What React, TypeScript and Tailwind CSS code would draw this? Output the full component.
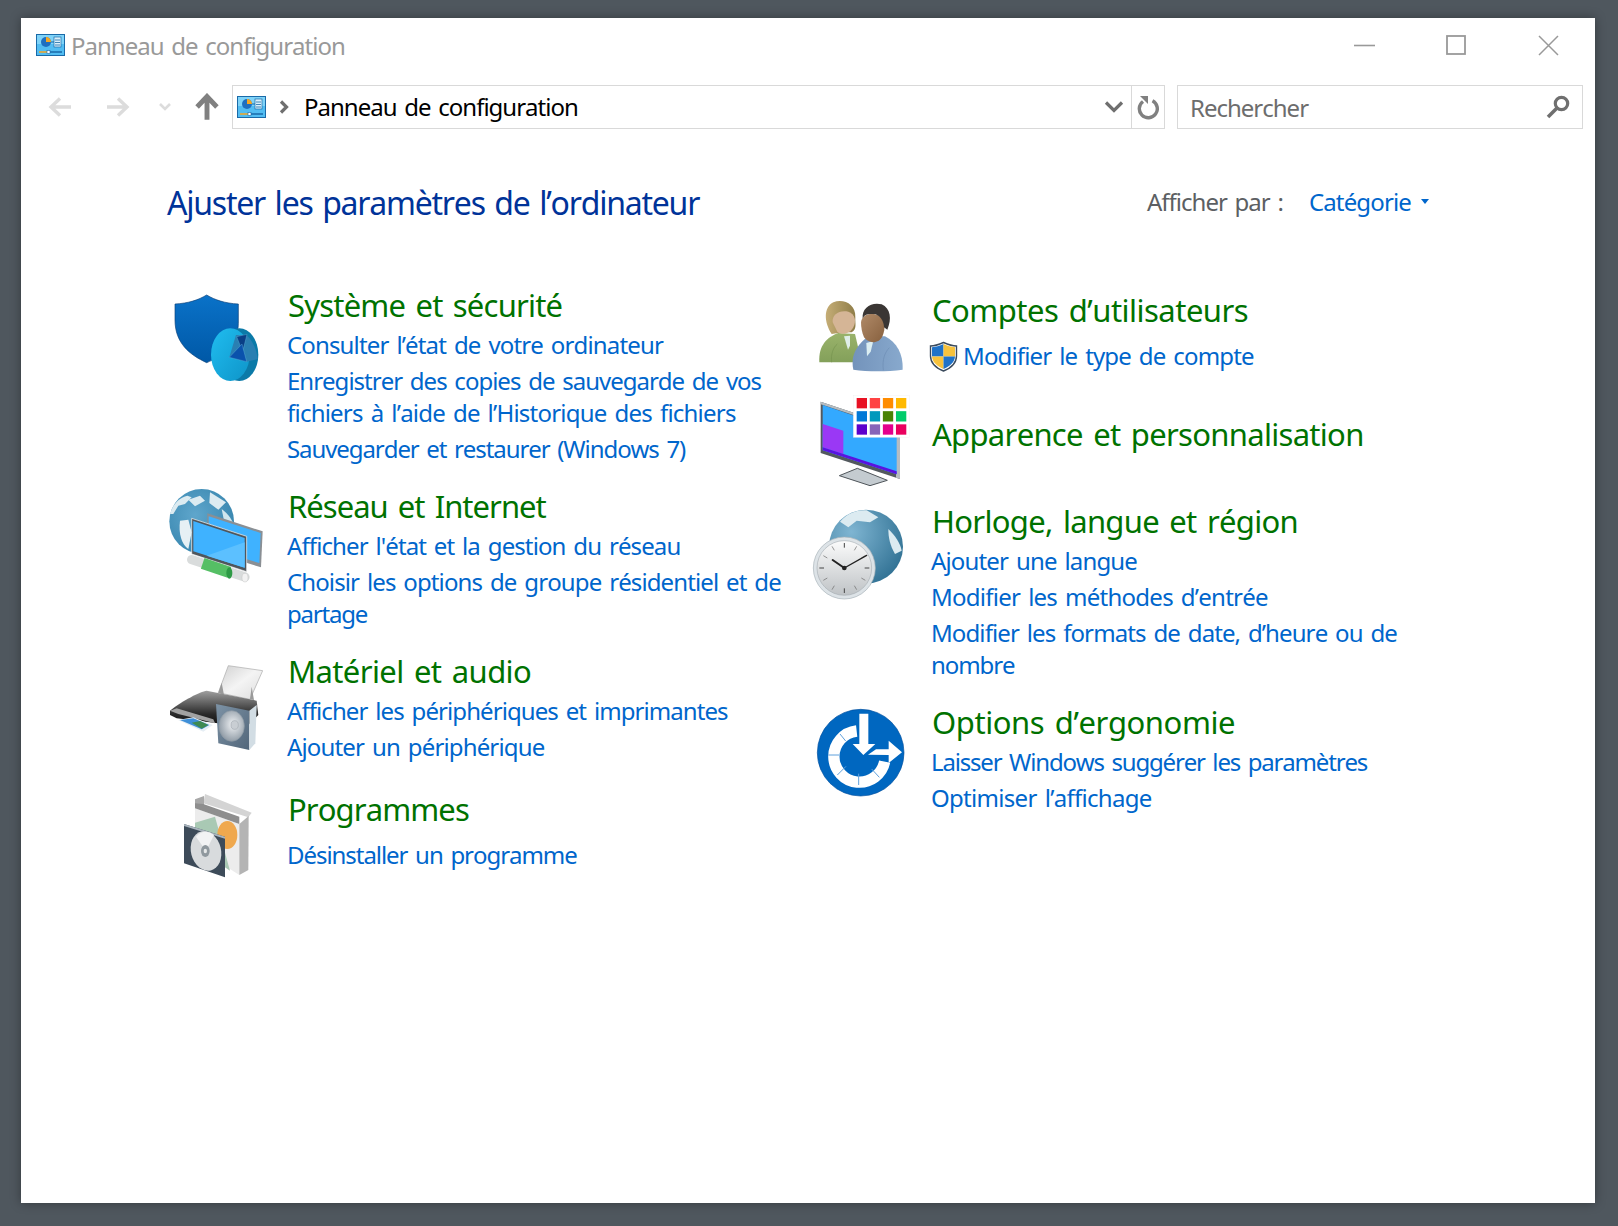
import React from "react";

const CpIcon = () => (
  <svg width="29" height="22" viewBox="0 0 29 22" className="block shrink-0">
    <rect x="0.5" y="0.5" width="28" height="21" fill="#52bdf2" stroke="#1a6aa8" />
    <rect x="1" y="1" width="27" height="9" fill="#7fd3f8" />
    <circle cx="10" cy="8" r="5" fill="#1f6fc0" />
    <path d="M10 8V3a5 5 0 0 1 5 5Z" fill="#f4a623" />
    <path d="M15 8h3" stroke="#1a6aa8" />
    <rect x="18" y="3" width="7" height="10" fill="#d9f0fb" stroke="#1a6aa8" strokeWidth="0.7" />
    <path d="M19 6h5M19 8.5h5M19 11h5" stroke="#1a6aa8" strokeWidth="0.8" />
    <path d="M3 18h8" stroke="#f4a623" strokeWidth="1.5" />
    <path d="M11 18h15" stroke="#1a6aa8" strokeWidth="1.5" />
    <rect x="11" y="16.5" width="3" height="3" fill="#fff" stroke="#1a6aa8" strokeWidth="0.6" />
  </svg>
);

const Arrow = ({ color, dir }: { color: string; dir: "l" | "r" | "u" }) => {
  const rot = dir === "l" ? 0 : dir === "r" ? 180 : 90;
  const size = dir === "u" ? 28 : 24;
  return (
    <svg width={size} height={size} viewBox="0 0 24 24" style={{ transform: `rotate(${rot}deg)` }} className="block">
      <path d="M23 12H3M12 3.5 3 12l9 8.5" fill="none" stroke={color} strokeWidth={dir === "u" ? 4.2 : 3.4} />
    </svg>
  );
};

const ShieldIcon = () => (
  <svg width="96" height="96" viewBox="51 30 288 288" className="block">
    <defs>
      <linearGradient id="s1" x1="0" y1="0" x2="0" y2="1">
        <stop offset="0" stopColor="#0a72c8" />
        <stop offset="1" stopColor="#0058a6" />
      </linearGradient>
      <linearGradient id="s2" x1="0" y1="0" x2="1" y2="1">
        <stop offset="0" stopColor="#20bdf0" />
        <stop offset="1" stopColor="#0e94c8" />
      </linearGradient>
    </defs>
    <path d="M75 72C115 70 145 60 170 45C195 60 225 70 265 72L265 130C265 190 215 230 170 248C120 225 75 190 75 120Z" fill="url(#s1)" stroke="#0b3f78" strokeWidth="2" />
    <ellipse cx="268" cy="224" rx="57" ry="79" fill="#0b7aa8" />
    <ellipse cx="241" cy="224" rx="58" ry="79" fill="url(#s2)" />
    <path d="M238 232L258 165L290 165C310 185 320 210 323 237L290 245Z" fill="#2a7fb2" />
    <path d="M260 170L291 163L278 215Z" fill="#0a3f86" stroke="#6ec4e8" strokeWidth="1" />
    <path d="M238 232L276 192L290 245Z" fill="#0a52ac" stroke="#6ec4e8" strokeWidth="1" />
  </svg>
);

const NetworkIcon = () => (
  <svg width="96" height="96" viewBox="51 624 288 288" className="block">
    <defs>
      <radialGradient id="n1" cx="0.4" cy="0.4" r="0.8">
        <stop offset="0" stopColor="#5fa6cc" />
        <stop offset="1" stopColor="#2f7fa8" />
      </radialGradient>
    </defs>
    <circle cx="155" cy="727" r="97" fill="url(#n1)" />
    <path d="M60 705C70 672 90 655 112 650L125 655L105 675L85 680L70 705Z" fill="#dcebf1" />
    <path d="M90 725L115 722L125 760L115 810C95 795 85 765 90 725Z" fill="#e6f0f4" />
    <path d="M115 662L150 650L165 665L135 682Z M180 640L228 670L205 692L178 672Z" fill="#dcebf1" />
    <path d="M215 690C235 705 250 725 252 745L225 740Z" fill="#cfe6ee" />
    <path d="M172 703L338 757L333 865L172 815Z" fill="#8a8f94" />
    <path d="M176 712L332 762L328 852L176 806Z" fill="#3fb2ff" />
    <path d="M125 718L290 772L290 878L125 825Z" fill="#50565c" stroke="#fff" strokeWidth="2" />
    <path d="M130 726L284 777L284 866L130 817Z" fill="#3fb2ff" />
    <path d="M284 790L284 866L170 830Z" fill="#5cc0ff" />
    <path d="M125 842L285 894" stroke="#d9dcdc" strokeWidth="28" strokeLinecap="round" />
    <path d="M158 853L238 880" stroke="#55bf65" strokeWidth="34" />
    <ellipse cx="238" cy="882" rx="9" ry="17" fill="#2d9a45" />
    <ellipse cx="285" cy="896" rx="9" ry="13" fill="#f2f2f2" stroke="#b5b5b5" />
  </svg>
);

const PrinterIcon = () => (
  <svg width="96" height="96" viewBox="51 60 288 288" className="block">
    <defs>
      <linearGradient id="p1" x1="0" y1="0" x2="0" y2="1">
        <stop offset="0" stopColor="#a0a0a0" />
        <stop offset="0.65" stopColor="#2a2a2a" />
        <stop offset="1" stopColor="#0c0c0c" />
      </linearGradient>
      <linearGradient id="p2" x1="0" y1="0" x2="1" y2="1">
        <stop offset="0" stopColor="#7d93a6" />
        <stop offset="1" stopColor="#52667a" />
      </linearGradient>
      <radialGradient id="p3" cx="0.55" cy="0.45" r="0.6">
        <stop offset="0" stopColor="#f0f2f4" />
        <stop offset="1" stopColor="#8b97a2" />
      </radialGradient>
      <linearGradient id="p4" x1="0" y1="0" x2="1" y2="1">
        <stop offset="0" stopColor="#cfcfcf" />
        <stop offset="0.5" stopColor="#f4f4f4" />
        <stop offset="1" stopColor="#dcdcdc" />
      </linearGradient>
    </defs>
    <path d="M235 77L338 92L300 178L205 158Z" fill="url(#p4)" stroke="#a8a8a8" strokeWidth="2" />
    <path d="M205 158L215 128L222 165Z M300 178L305 140L312 180Z" fill="#9a9a9a" />
    <path d="M60 212C100 180 150 155 170 152L320 182L325 225L290 260L80 235L60 225Z" fill="url(#p1)" />
    <path d="M60 212L80 205L190 238L195 250L85 222Z" fill="#a2a2a2" />
    <path d="M84 240L130 232L188 255L160 275Z" fill="#e6eef4" />
    <path d="M90 240L130 235L178 255L155 268Z" fill="#3f8fd8" />
    <path d="M125 248L150 243L175 255L155 266Z" fill="#3f8a52" />
    <path d="M198 192L298 212L298 330L205 310Z" fill="url(#p2)" />
    <path d="M298 212L320 195L316 310L298 330Z" fill="#d2dde4" />
    <ellipse cx="245" cy="258" rx="38" ry="46" fill="url(#p3)" stroke="#8e9aa4" strokeWidth="2" />
    <ellipse cx="254" cy="255" rx="11" ry="13" fill="#c9ced3" stroke="#7c868e" />
  </svg>
);

const BoxIcon = () => (
  <svg width="96" height="96" viewBox="51 450 288 288" className="block">
    <path d="M165 462L305 518L295 532L160 490Z" fill="#d4d4d4" />
    <path d="M135 478L162 468L162 495L135 505Z" fill="#a8a8a8" />
    <path d="M135 505L268 552L268 705L135 620Z" fill="#ececec" />
    <path d="M135 490L160 492L268 530L268 552L135 505Z" fill="#8e8e8e" />
    <path d="M268 552L296 528L295 690L268 705Z" fill="#b4b4b4" />
    <path d="M135 548L195 530L240 692L135 620Z" fill="#a9c9b4" />
    <ellipse cx="232" cy="585" rx="30" ry="42" fill="#efa84e" />
    <path d="M102 552L225 590L225 712L102 670Z" fill="#3d4b59" />
    <path d="M102 552L225 590L225 596L102 558Z" fill="#a9b4bd" />
    <ellipse cx="168" cy="633" rx="45" ry="60" transform="rotate(-14 168 633)" fill="#d8dbdd" />
    <path d="M168 633L138 590A45 60 0 0 1 192 585Z" fill="#f2f3f4" />
    <ellipse cx="166" cy="633" rx="13" ry="18" fill="#8f989e" />
    <ellipse cx="166" cy="633" rx="5" ry="7" fill="#e5e7e8" />
  </svg>
);

const UsersIcon = () => (
  <svg width="96" height="96" viewBox="36 54 288 288" className="block">
    <defs>
      <linearGradient id="u1" x1="0" y1="0" x2="0" y2="1">
        <stop offset="0" stopColor="#9ab36b" />
        <stop offset="1" stopColor="#83a05a" />
      </linearGradient>
      <linearGradient id="u2" x1="0" y1="0" x2="1" y2="0">
        <stop offset="0" stopColor="#7393bb" />
        <stop offset="1" stopColor="#88a9cd" />
      </linearGradient>
      <linearGradient id="u3" x1="0" y1="0" x2="1" y2="1">
        <stop offset="0" stopColor="#b08a68" />
        <stop offset="1" stopColor="#87603e" />
      </linearGradient>
      <linearGradient id="u4" x1="0" y1="0" x2="1" y2="0">
        <stop offset="0" stopColor="#c5ad76" />
        <stop offset="1" stopColor="#8f7d48" />
      </linearGradient>
    </defs>
    <path d="M58 250C55 200 80 175 115 162L165 165L185 250Z" fill="url(#u1)" />
    <path d="M132 172L150 170L150 200L144 212Z" fill="#dfeee8" />
    <path d="M95 165C72 130 70 85 100 70C130 58 168 75 166 115C165 135 172 150 155 160L130 160Z" fill="url(#u4)" />
    <path d="M98 130C95 105 120 92 145 98C165 105 170 125 160 145C150 165 125 170 112 158Z" fill="#d5b596" />
    <path d="M95 250C92 225 100 205 112 195" fill="none" stroke="#76924e" strokeWidth="2" />
    <path d="M160 272C150 225 175 195 205 172L255 172C290 190 310 225 308 272C260 278 205 278 160 272Z" fill="url(#u2)" />
    <path d="M199 192L220 186L212 218L201 232Z" fill="#dbeef2" />
    <path d="M250 274C246 240 255 220 268 206" fill="none" stroke="#6d8db4" strokeWidth="2" />
    <path d="M183 130C186 105 215 100 238 110C258 120 256 150 248 170C238 195 205 195 192 175C186 162 183 145 183 130Z" fill="url(#u3)" />
    <path d="M188 118C185 86 215 68 245 76C272 88 276 120 262 152L252 145C252 125 238 105 220 105C205 105 195 105 188 118Z" fill="#3a3634" />
  </svg>
);

const swatches = [
  ["#e81123", "#ff4343", "#ff8c00", "#ffb900"],
  ["#0078d7", "#0099bc", "#498205", "#00cc6a"],
  ["#5c00cc", "#8764b8", "#e3008c", "#ea005e"],
];

const AppearanceIcon = () => (
  <svg width="100" height="96" viewBox="36 342 300 288" className="block">
    <path d="M62 368L300 448L300 600L62 522Z" fill="#53595e" />
    <path d="M288 444L300 448L300 600L288 596Z" fill="#b6bcc1" />
    <path d="M62 368L300 448L300 454L62 376Z" fill="#b6bcc1" />
    <path d="M68 378L290 454L290 586L68 514Z" fill="#33a9ff" />
    <path d="M68 435L130 455L130 525L68 505Z" fill="#9a38f5" />
    <path d="M68 505L290 577L290 586L68 514Z" fill="#5a12e0" />
    <path d="M190 578L222 588L222 604L190 594Z" fill="#c9cdd0" />
    <path d="M118 590L172 568L262 604L210 620Z" fill="#c4cbd0" stroke="#50565b" strokeWidth="3" />
    <rect x="160" y="350" width="168" height="125" fill="#fff" stroke="#ececec" />
    {swatches.map((row, r) =>
      row.map((c, i) => (
        <rect key={c} x={170 + i * 39.3} y={357 + r * 39.5} width="31" height="31" fill={c} />
      )),
    )}
  </svg>
);

const ClockIcon = () => (
  <svg width="96" height="96" viewBox="36 684 288 288" className="block">
    <defs>
      <radialGradient id="c1" cx="0.3" cy="0.3" r="0.9">
        <stop offset="0" stopColor="#7fb5d2" />
        <stop offset="1" stopColor="#27698c" />
      </radialGradient>
      <linearGradient id="c2" x1="0" y1="0" x2="0" y2="1">
        <stop offset="0" stopColor="#fbfbfb" />
        <stop offset="1" stopColor="#bfc3c6" />
      </linearGradient>
    </defs>
    <circle cx="198" cy="803" r="111" fill="url(#c1)" />
    <path d="M120 728C145 700 175 692 200 694L235 715L210 730L170 725L145 745Z" fill="#dcebf1" />
    <path d="M265 750C285 770 300 790 305 815L285 825C270 800 265 775 265 750Z" fill="#dcebf1" />
    <circle cx="133" cy="867" r="93" fill="#dde3e7" stroke="#a8b2b8" strokeWidth="2" />
    <circle cx="133" cy="867" r="82" fill="url(#c2)" stroke="#9aa3a9" strokeWidth="1.5" />
    <path d="M133 792V806M133 928V942M58 867H72M194 867H208" stroke="#444" strokeWidth="3" />
    <path d="M96 802L103 814M170 802L163 814M70 830L82 837M196 830L184 837M70 904L82 897M196 904L184 897M96 932L103 920M170 932L163 920" stroke="#666" strokeWidth="2" />
    <path d="M133 867L98 843" stroke="#222" strokeWidth="6" strokeLinecap="round" />
    <path d="M133 867L200 829" stroke="#222" strokeWidth="4" strokeLinecap="round" />
    <circle cx="133" cy="867" r="7" fill="#222" />
  </svg>
);

const ErgoIcon = () => (
  <svg width="96" height="96" viewBox="36 48 288 288" className="block">
    <circle cx="182" cy="191" r="130" fill="#0067c0" stroke="#004f9e" strokeWidth="2" />
    <path d="M170 126A77 77 0 1 0 254 218" fill="none" stroke="#fff" strokeWidth="34" />
    <path d="M120 135L137 156M85 198H118M112 258L138 232M176 288V254M238 265L215 240" stroke="#5fa0dc" strokeWidth="3" />
    <path d="M178 74H205V165H226L190 198L158 165H178Z" fill="#fff" />
    <path d="M204 197L228 181H266V155L306 190L266 222V198Z" fill="#fff" />
  </svg>
);

const Uac = () => (
  <svg width="29" height="31" viewBox="0 0 29 31" className="block shrink-0">
    <path d="M14.5 1.5C10 3.5 6 5 1.5 5V15C1.5 22 7 27 14.5 30C22 27 27.5 22 27.5 15V5C23 5 19 3.5 14.5 1.5Z" fill="#fff" stroke="#3a4a5c" strokeWidth="1.4" />
    <path d="M14.5 3C10.5 4.8 6.8 6 3 6.2V15.5H14.5Z" fill="#1f72c8" />
    <path d="M14.5 3C18.5 4.8 22.2 6 26 6.2V15.5H14.5Z" fill="#f7c23c" />
    <path d="M3 15.5H14.5V28C8.5 25.5 3.5 21.5 3 15.5Z" fill="#f7c23c" />
    <path d="M26 15.5H14.5V28C20.5 25.5 25.5 21.5 26 15.5Z" fill="#1f72c8" />
  </svg>
);

const linkCls = "text-[24px] leading-[32px] text-[#0066cc] tracking-[-0.85px] [word-spacing:2.5px]";
const headCls = "text-[31px] leading-[40px] text-[#007200] tracking-[-0.7px] [word-spacing:3px]";
const uiCls = "text-[24px] tracking-[-1px] [word-spacing:2.5px]";

function Section({
  icon,
  title,
  links,
  className,
  listClass,
  headPad,
}: {
  icon: React.ReactNode;
  title: React.ReactNode;
  links: React.ReactNode[];
  className: string;
  listClass?: string;
  headPad?: string;
}) {
  return (
    <div className={`flex ${className}`}>
      <div className="w-[120px] shrink-0">{icon}</div>
      <div className="min-w-0 flex-1">
        <div className={`${headCls} ${headPad ?? ""}`}>{title}</div>
        <div className={`flex flex-col gap-1 ${listClass ?? "mt-1"}`}>
          {links.map((l, i) => (
            <div key={i} className={linkCls}>
              {l}
            </div>
          ))}
        </div>
      </div>
    </div>
  );
}

export default function App() {
  return (
    <div className="h-[1226px] w-[1618px] overflow-hidden bg-[#4f575e] pl-[21px] pt-[18px] font-['Noto_Sans',sans-serif] [font-kerning:none]">
      <div className="h-[1185px] w-[1574px] bg-white shadow-[0_0_10px_rgba(0,0,0,0.35)]">
        {/* title bar */}
        <div className="flex h-[54px] items-center pl-[15px]">
          <CpIcon />
          <span className={`ml-[6px] pt-[2px] text-[#999999] ${uiCls}`}>Panneau de configuration</span>
          <div className="ml-auto flex items-center pr-[36px]">
            <svg width="21" height="21" viewBox="0 0 21 21" className="block">
              <path d="M0 10.5H21" stroke="#999" strokeWidth="1.6" />
            </svg>
            <svg width="20" height="20" viewBox="0 0 20 20" className="ml-[71px] block">
              <rect x="1" y="1" width="18" height="18" fill="none" stroke="#999" strokeWidth="1.8" />
            </svg>
            <svg width="21" height="21" viewBox="0 0 21 21" className="ml-[72px] block">
              <path d="M1 1L20 20M20 1L1 20" stroke="#999" strokeWidth="1.5" />
            </svg>
          </div>
        </div>
        {/* nav */}
        <div className="mt-[13px] flex h-[44px] items-center pl-[27px] pr-[12px]">
          <Arrow color="#dcdcdc" dir="l" />
          <div className="ml-[34px]">
            <Arrow color="#dcdcdc" dir="r" />
          </div>
          <svg width="14" height="10" viewBox="0 0 14 10" className="ml-[28px] block">
            <path d="M2 2L7 7L12 2" fill="none" stroke="#dcdcdc" strokeWidth="2.6" />
          </svg>
          <div className="ml-[21px]">
            <Arrow color="#808080" dir="u" />
          </div>
          <div className="ml-[11px] flex h-[44px] w-[933px] items-center border border-[#d9d9d9] pl-[4px]">
            <CpIcon />
            <svg width="10" height="14" viewBox="0 0 10 14" className="ml-[13px] block">
              <path d="M2 1.5L7.5 7L2 12.5" fill="none" stroke="#6f6f6f" strokeWidth="3.2" />
            </svg>
            <span className={`ml-[15px] text-black ${uiCls}`}>Panneau de configuration</span>
            <svg width="20" height="14" viewBox="0 0 20 14" className="ml-auto block">
              <path d="M2 2.5L10 10.5L18 2.5" fill="none" stroke="#6f6f6f" strokeWidth="3.2" />
            </svg>
            <div className="ml-[7px] flex h-full w-[33px] items-center justify-center border-l border-[#d9d9d9]">
              <svg width="22" height="26" viewBox="0 0 22 26" className="block">
                <path d="M6 7.5A9 9 0 1 0 15.5 6.8" fill="none" stroke="#808080" strokeWidth="3.4" />
                <path d="M3 2H11V10Z" fill="#808080" />
              </svg>
            </div>
          </div>
          <div className="ml-[12px] flex h-[44px] w-[406px] items-center border border-[#d9d9d9] pl-[12px] pr-[12px]">
            <span className="pt-[2px] text-[24px] tracking-[-1px] text-[#6d6d6d]">Rechercher</span>
            <svg width="24" height="24" viewBox="0 0 24 24" className="ml-auto block">
              <circle cx="15.5" cy="8.5" r="6.2" fill="none" stroke="#6f6f6f" strokeWidth="3.2" />
              <path d="M11 13L2 22" stroke="#6f6f6f" strokeWidth="3.6" />
            </svg>
          </div>
        </div>
        {/* content */}
        <div className="pl-[146px]">
          <div className="mt-[54px] flex h-[40px] w-[1262px] items-center">
            <h1 className="text-[32px] leading-[40px] tracking-[-1.23px] text-[#003399] [word-spacing:2.5px]">
              Ajuster les paramètres de l’ordinateur
            </h1>
            <span className="ml-auto pb-[2px] text-[24px] tracking-[-1px] text-[#5c5f63] [word-spacing:2.5px]">Afficher par :</span>
            <span className="ml-[26px] pb-[2px] text-[24px] tracking-[-0.85px] text-[#0066cc]">Catégorie</span>
            <svg width="8" height="5" viewBox="0 0 8 5" className="mb-[4px] ml-[10px] block">
              <path d="M0 0H8L4 5Z" fill="#0066cc" />
            </svg>
          </div>
          <div className="mt-[62px] flex">
            <div className="w-[645px] shrink-0">
              <Section
                className=""
                headPad="pl-[1px]"
                icon={<div className="mt-[5px]"><ShieldIcon /></div>}
                title={<span className="tracking-[-0.8px]">Système et sécurité</span>}
                links={[
                  "Consulter l’état de votre ordinateur",
                  <>
                    <span className="block tracking-[-1px]">Enregistrer des copies de sauvegarde de vos</span>
                    <span className="block tracking-[-0.78px]">fichiers à l’aide de l’Historique des fichiers</span>
                  </>,
                  <span className="tracking-[-1.08px]">Sauvegarder et restaurer (Windows 7)</span>,
                ]}
              />
              <Section
                className="mt-[21px]"
                headPad="pl-[1px]"
                icon={<div className="mt-[1px]"><NetworkIcon /></div>}
                title={<span className="tracking-[-0.98px]">Réseau et Internet</span>}
                links={[
                  <span className="tracking-[-0.9px]">Afficher l'état et la gestion du réseau</span>,
                  <>
                    <span className="block tracking-[-0.89px]">Choisir les options de groupe résidentiel et de</span>
                    <span className="block tracking-[-1.2px]">partage</span>
                  </>,
                ]}
              />
              <Section
                className="mt-[21px]"
                headPad="pl-[1px]"
                icon={<div className="mt-[9px]"><PrinterIcon /></div>}
                title={<span className="tracking-[-0.62px]">Matériel et audio</span>}
                links={[
                  <span className="tracking-[-0.92px]">Afficher les périphériques et imprimantes</span>,
                  "Ajouter un périphérique",
                ]}
              />
              <Section
                className="mt-[26px]"
                headPad="pl-[1px]"
                icon={<div className="mt-[1px]"><BoxIcon /></div>}
                title={<span className="tracking-[-0.9px]">Programmes</span>}
                listClass="mt-[10px]"
                links={[<span className="tracking-[-1.05px]">Désinstaller un programme</span>]}
              />
            </div>
            <div className="w-[600px] pt-[5px]">
              <div className="flex">
                <div className="w-[120px] shrink-0">
                  <div className="mt-[7px]"><UsersIcon /></div>
                </div>
                <div>
                  <div className={headCls}>
                    <span className="tracking-[-0.52px]">Comptes d’utilisateurs</span>
                  </div>
                  <div className="-ml-[3px] mt-[10px] flex items-center gap-[5px]">
                    <Uac />
                    <span className={`${linkCls} tracking-[-0.8px]`}>Modifier le type de compte</span>
                  </div>
                </div>
              </div>
              <div className="flex">
                <div className="w-[120px] shrink-0">
                  <AppearanceIcon />
                </div>
                <div className={`pt-[21px] ${headCls}`}>Apparence et personnalisation</div>
              </div>
              <Section
                className="mt-[12px]"
                icon={<div className="mt-[6px]"><ClockIcon /></div>}
                title="Horloge, langue et région"
                links={[
                  <span className="-ml-[1px] block tracking-[-0.85px]">Ajouter une langue</span>,
                  <span className="-ml-[1px] block tracking-[-0.75px]">Modifier les méthodes d’entrée</span>,
                  <>
                    <span className="-ml-[1px] block tracking-[-0.9px]">Modifier les formats de date, d’heure ou de</span>
                    <span className="-ml-[1px] block tracking-[-1.1px]">nombre</span>
                  </>,
                ]}
              />
              <Section
                className="mt-[21px]"
                icon={<div className="mt-[3px]"><ErgoIcon /></div>}
                title={<span className="tracking-[-0.43px]">Options d’ergonomie</span>}
                links={[
                  <span className="-ml-[1px] block tracking-[-1.17px]">Laisser Windows suggérer les paramètres</span>,
                  <span className="-ml-[1px] block tracking-[-0.7px]">Optimiser l’affichage</span>,
                ]}
              />
            </div>
          </div>
        </div>
      </div>
    </div>
  );
}
